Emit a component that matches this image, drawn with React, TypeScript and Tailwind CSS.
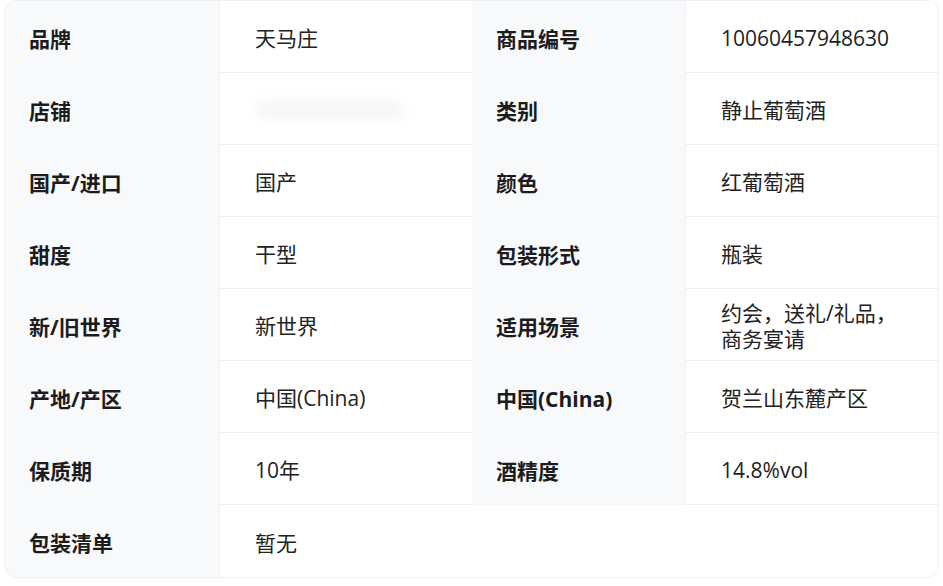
const rows: [string, string, string | null, string | null][] = [
  ["品牌", "天马庄", "商品编号", "10060457948630"],
  ["店铺", "", "类别", "静止葡萄酒"],
  ["国产/进口", "国产", "颜色", "红葡萄酒"],
  ["甜度", "干型", "包装形式", "瓶装"],
  ["新/旧世界", "新世界", "适用场景", "约会，送礼/礼品，商务宴请"],
  ["产地/产区", "中国(China)", "中国(China)", "贺兰山东麓产区"],
  ["保质期", "10年", "酒精度", "14.8%vol"],
  ["包装清单", "暂无", null, null],
];

function Label({ text }: { text: string }) {
  return (
    <div className="flex items-center bg-[#f8f9fb] pl-6 pt-[5px] text-[21px] font-bold text-[#1c1c1c]">
      {text}
    </div>
  );
}

function Value({ text, last, wide }: { text: string; last: boolean; wide?: boolean }) {
  return (
    <div
      className={`flex items-center border-l border-[#eef0f3] bg-white pl-[35px] pr-9 pt-[3px] text-[21px] leading-[26px] text-[#222] ${
        last ? "" : "border-b"
      } ${wide ? "col-span-3" : ""}`}
    >
      {text === "" ? (
        <div className="h-[20px] w-[150px] rounded-full bg-[#f1f1f1] blur-[6px] opacity-60" />
      ) : (
        <span>{text}</span>
      )}
    </div>
  );
}

export default function App() {
  return (
    <div
      className="bg-white px-1 pb-2"
      style={{ fontFamily: '"Open Sans", "Noto Sans CJK SC", sans-serif' }}
    >
      <div className="grid grid-cols-[214px_253px_213px_1fr] auto-rows-[72px] overflow-hidden rounded-xl border border-[#eef0f3] [&>*:nth-last-child(-n+2)]:h-[73px]">
        {rows.map((r, i) => {
          const last = i === rows.length - 1;
          return [
            <Label key={`l1-${i}`} text={r[0]} />,
            <Value key={`v1-${i}`} text={r[1]} last={last} wide={r[2] === null} />,
            r[2] !== null ? <Label key={`l2-${i}`} text={r[2]} /> : null,
            r[3] !== null ? <Value key={`v2-${i}`} text={r[3]} last={last} /> : null,
          ];
        })}
      </div>
    </div>
  );
}
